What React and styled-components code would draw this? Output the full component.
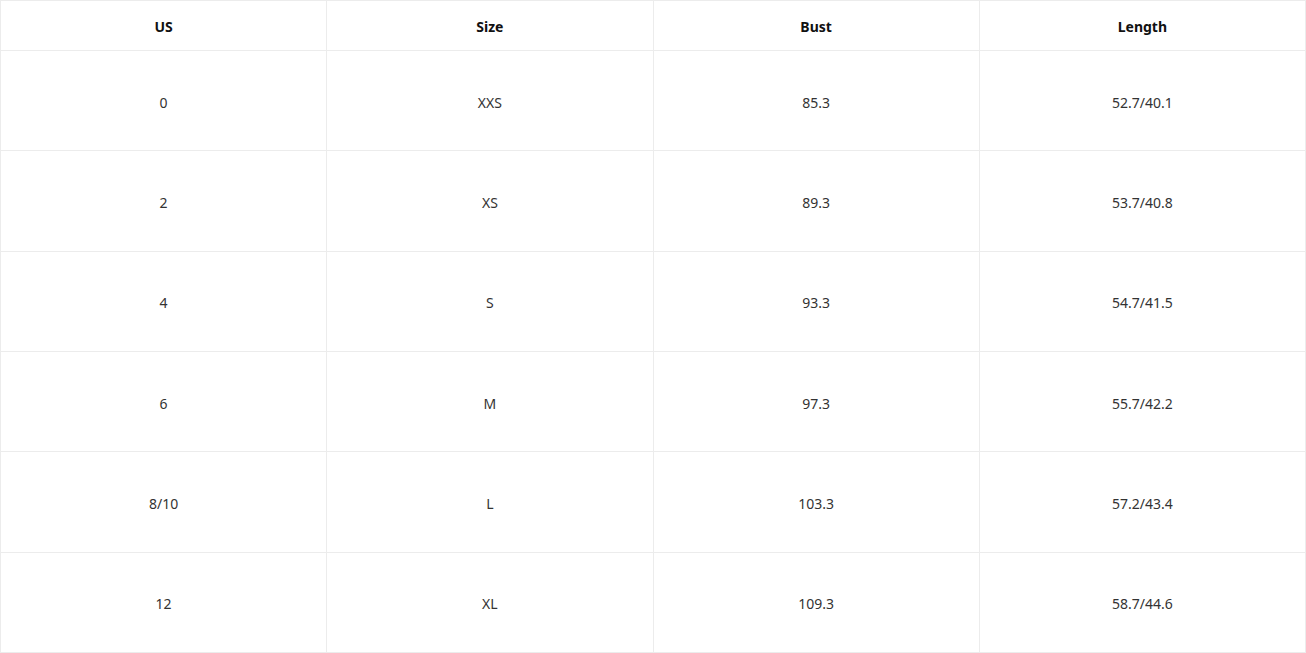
import React from 'react';
import styled, { createGlobalStyle } from 'styled-components';

const GlobalStyle = createGlobalStyle`
  html, body {
    margin: 0;
    padding: 0;
    background: #ffffff;
  }
  body {
    font-family: "Noto Sans", "Open Sans", sans-serif;
    color: #222;
  }
`;

const Table = styled.table`
  width: 1306px;
  border-collapse: collapse;
  table-layout: fixed;
`;

const HeadCell = styled.th`
  height: 50px;
  border: 1px solid #ececec;
  font-size: 14px;
  font-weight: 700;
  color: #111;
  text-align: center;
  vertical-align: middle;
  padding: 2px 0 0;
  box-sizing: border-box;
`;

const Cell = styled.td`
  height: 100.33px;
  border: 1px solid #ececec;
  font-size: 14px;
  color: #333;
  text-align: center;
  vertical-align: middle;
  padding: 3px 0 0;
  box-sizing: border-box;
`;

const columns = ['US', 'Size', 'Bust', 'Length'];

const rows = [
  ['0', 'XXS', '85.3', '52.7/40.1'],
  ['2', 'XS', '89.3', '53.7/40.8'],
  ['4', 'S', '93.3', '54.7/41.5'],
  ['6', 'M', '97.3', '55.7/42.2'],
  ['8/10', 'L', '103.3', '57.2/43.4'],
  ['12', 'XL', '109.3', '58.7/44.6'],
];

function App() {
  return (
    <>
      <GlobalStyle />
      <Table>
        <thead>
          <tr>
            {columns.map((c) => (
              <HeadCell key={c}>{c}</HeadCell>
            ))}
          </tr>
        </thead>
        <tbody>
          {rows.map((row, i) => (
            <tr key={i}>
              {row.map((v, j) => (
                <Cell key={j}>{v}</Cell>
              ))}
            </tr>
          ))}
        </tbody>
      </Table>
    </>
  );
}

export default App;
